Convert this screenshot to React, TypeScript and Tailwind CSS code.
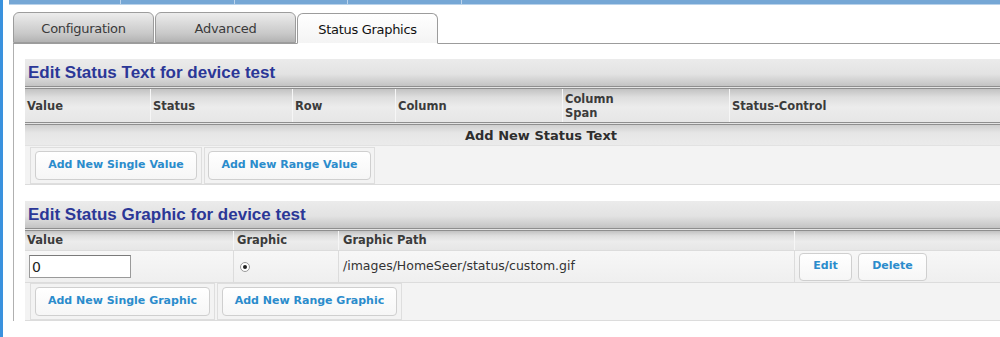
import React from "react";

const font = "font-['DejaVu_Sans',sans-serif]";

function Tab({ label, active }: { label: string; active?: boolean }) {
  return (
    <div
      className={
        "flex h-[31px] w-[141px] items-center justify-center rounded-t-[6px] border border-[#9c9c9c] pt-[3px] text-[13px] tracking-[-0.3px] " +
        (active
          ? "-mb-px border-b-white bg-[linear-gradient(to_bottom,#ffffff,#f4f4f4)] text-[#111]"
          : "bg-[linear-gradient(to_bottom,#ececec,#c9c9c9_70%,#b3b3b3)] text-[#3a3a3a]")
      }
    >
      {label}
    </div>
  );
}

function Btn({ children, className = "" }: { children: React.ReactNode; className?: string }) {
  return (
    <button
      className={
        "flex items-center justify-center rounded-[4px] border border-[#cfcfcf] bg-[linear-gradient(to_bottom,#ffffff,#f6f6f6)] text-[11px] font-bold text-[#2b8ccc] " +
        className
      }
    >
      {children}
    </button>
  );
}

function SectionTitle({ children }: { children: React.ReactNode }) {
  return (
    <div className="flex h-[27px] items-center bg-[linear-gradient(to_bottom,#ebebeb,#e3e3e3_55%,#c3c3c3)] pl-[3px] font-['Liberation_Sans',Arial,sans-serif] text-[17px] font-bold text-[#2b3797]">
      {children}
    </div>
  );
}

const thBg =
  "bg-[linear-gradient(to_bottom,#c2c2c2,#dedede_25%,#ececec_55%,#e6e6e6)] border-r border-[#f6f6f6]";

export default function App() {
  const cols1 = [
    { label: "Value", w: "w-[126px]" },
    { label: "Status", w: "w-[142px]" },
    { label: "Row", w: "w-[103px]" },
    { label: "Column", w: "w-[167px]" },
    { label: "Column Span", w: "w-[167px]" },
    { label: "Status-Control", w: "flex-1" },
  ];

  return (
    <div className={"h-[337px] w-[1000px] overflow-hidden border-l-[3px] border-[#3a92de] bg-white " + font}>
      <div className="pl-[6px]">
        {/* top nav strip */}
        <div className="flex h-[5px] border-b border-[#b9d2ea] bg-[#76a7d5]">
          <div className="w-[112px] border-r border-[#bcd4ec]" />
          <div className="w-[114px] border-r border-[#bcd4ec]" />
          <div className="w-[113px] border-r border-[#bcd4ec]" />
          <div className="w-[114px] border-r border-[#bcd4ec]" />
          <div className="flex-1" />
        </div>

        <div className="ml-[4px] mt-[7px]">
          {/* tabs */}
          <div className="flex items-end gap-[1px] border-b border-[#9c9c9c]">
            <Tab label="Configuration" />
            <Tab label="Advanced" />
            <Tab label="Status Graphics" active />
          </div>

          <div className="w-[1200px] border-l border-[#b0b0b0] pl-[11px] pt-[15px]">
            {/* Status text section */}
            <div className="w-[1032px] border-b border-[#dcdcdc] bg-[#f3f3f3]">
              <SectionTitle>Edit Status Text for device test</SectionTitle>
              <div className="h-[3px] border-y border-[#8e8e8e] bg-[#e4e4e4]" />
              <div className="flex h-[33px] text-[11.5px] font-bold text-[#3b3b3b]">
                {cols1.map((c) => (
                  <div key={c.label} className={"flex items-center pl-[2px] leading-[14px] " + c.w + " " + thBg}>
                    {c.label === "Column Span" ? (
                      <span>
                        Column
                        <br />
                        Span
                      </span>
                    ) : (
                      c.label
                    )}
                  </div>
                ))}
              </div>
              <div className="h-[3px] border-y border-[#8e8e8e] bg-[#e4e4e4]" />
              <div className="flex h-[20px] items-center justify-center bg-[linear-gradient(to_bottom,#cfcfcf,#e6e6e6_40%,#ebebeb)] pt-[2px] text-[13px] font-bold text-[#2e2e2e]">
                Add New Status Text
              </div>
              <div className="flex h-[39px] items-center gap-[2px] border-t border-[#e2e2e2] pl-[5px]">
                <div className="border border-[#dedede] p-[3px] px-[4px]">
                  <Btn className="h-[29px] w-[162px]">Add New Single Value</Btn>
                </div>
                <div className="border border-[#dedede] p-[3px] px-[3px]">
                  <Btn className="h-[29px] w-[163px]">Add New Range Value</Btn>
                </div>
              </div>
            </div>

            {/* Status graphic section */}
            <div className="mt-[16px] w-[1032px] border-b border-[#dcdcdc] bg-[#f3f3f3]">
              <SectionTitle>Edit Status Graphic for device test</SectionTitle>
              <div className="h-[3px] border-y border-[#8e8e8e] bg-[#e4e4e4]" />
              <div className="flex h-[19px] text-[11.5px] font-bold text-[#3b3b3b]">
                <div className={"flex w-[209px] items-center pl-[2px] " + thBg}>Value</div>
                <div className={"flex w-[105px] items-center pl-[3px] " + thBg}>Graphic</div>
                <div className={"flex w-[456px] items-center pl-[4px] " + thBg}>Graphic Path</div>
                <div className={"flex-1 " + thBg} />
              </div>
              <div className="flex h-[33px] border-y border-[#dcdcdc] bg-[linear-gradient(to_bottom,#f7f7f7,#efefef)] text-[12.5px] text-[#333]">
                <div className="flex w-[209px] items-center border-r border-[#dcdcdc] pl-[4px]">
                  <input
                    readOnly
                    value="0"
                    className="h-[23px] w-[102px] border border-[#9a9a9a] border-t-[#7a7a7a] bg-white px-[2px] text-[14px] text-[#222] outline-none"
                  />
                </div>
                <div className="flex w-[105px] items-center border-r border-[#dcdcdc] pl-[6px]">
                  <span className="flex h-[10px] w-[10px] items-center justify-center rounded-full border border-[#9a9a9a] bg-white">
                    <span className="h-[4px] w-[4px] rounded-full bg-[#222]" />
                  </span>
                </div>
                <div className="flex w-[456px] items-center border-r border-[#dcdcdc] pl-[4px]">
                  /images/HomeSeer/status/custom.gif
                </div>
                <div className="flex flex-1 items-center gap-[6px] pl-[4px]">
                  <Btn className="h-[28px] w-[53px]">Edit</Btn>
                  <Btn className="h-[28px] w-[69px]">Delete</Btn>
                </div>
              </div>
              <div className="flex h-[37px] items-center gap-[2px] pl-[5px]">
                <div className="border border-[#dedede] p-[3px] px-[4px]">
                  <Btn className="h-[29px] w-[175px]">Add New Single Graphic</Btn>
                </div>
                <div className="border border-[#dedede] p-[3px] px-[4px]">
                  <Btn className="h-[29px] w-[175px]">Add New Range Graphic</Btn>
                </div>
              </div>
            </div>
          </div>
        </div>
      </div>
    </div>
  );
}
